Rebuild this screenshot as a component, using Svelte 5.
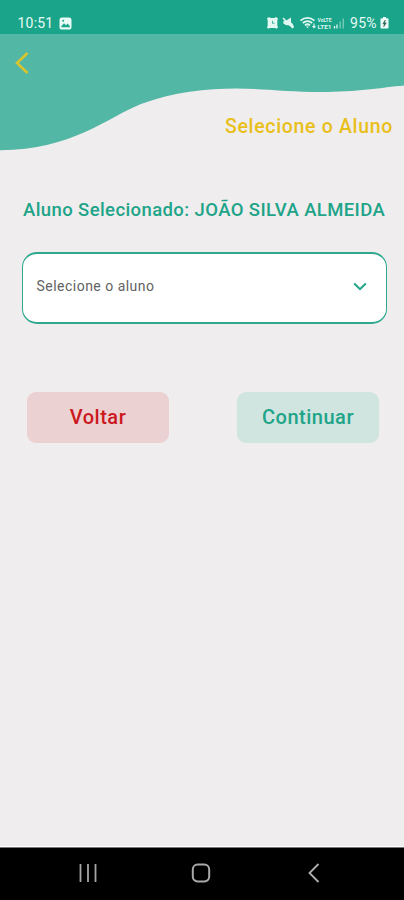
<script>
  let selectLabel = 'Selecione o aluno';
  let student = 'JOÃO SILVA ALMEIDA';
</script>

<div class="screen">
  <div class="status">
    <span class="time">10:51</span>
    <svg class="photo" width="13" height="13" viewBox="0 0 13 13">
      <rect x="0.5" y="0.5" width="12" height="12" rx="2.6" fill="#e9fbf6" />
      <path d="M2.3 9.2 5 6.2l2 2 1.7-1.6 2.2 2.6v1H2.3z" fill="#1aa58a" />
      <circle cx="4.2" cy="3.8" r="1" fill="#1aa58a" />
    </svg>
    <svg class="tray" width="82" height="14" viewBox="0 0 82 14">
      <g fill="#e3f8f2">
        <path d="M1 2.5 3 1l1.600 1h3.800L10 1l2 1.500-.7 2v5l.7 2-1.500 1.200-1.200-.8H3.700l-1.200.8L1 11.500l.7-2v-5z" />
        <path d="M17.500 4.800H20l5-3.200v4.600l1.700 1.700 1.300 3-1.200 1.400-3-2.800-4-.4L17.300 7.500z" />
      </g>
      <g fill="none" stroke="#e3f8f2">
        <path d="M6.500 4.800V7.300h2" stroke="#1aa58a" stroke-width=".8" />
        <path d="m17 2 10 10" stroke-width="1.500" />
        <path d="M34.500 4.600q7-5.400 14 0M36.800 7q4.700-3.800 9.400 0M39 9.400q2.500-2.200 5 0" stroke-width="1.800" />
        <path d="M48 7.500v4m-1.500-1.400 1.500 1.600 1.500-1.600" stroke-width="1.100" />
        <path d="M68.500 10v2.500M71 8.500v4" stroke-width="1.300" />
        <path d="M74.200 5.500v7M77.300 2.500v10" stroke-width="1.400" opacity=".45" />
      </g>
      <path d="m40 10.500 1.500 1.800 1.500-1.800z" fill="#e3f8f2" />
      <text x="51.500" y="6.200" class="tiny" textLength="14" lengthAdjust="spacingAndGlyphs">VoLTE</text>
      <text x="51.500" y="12.600" class="tiny" textLength="14" lengthAdjust="spacingAndGlyphs">LTE1</text>
    </svg>
    <span class="percent">95%</span>
    <svg class="battery" width="9" height="12" viewBox="0 0 9 12">
      <path d="M3 0h3v1.300h1.500q1 0 1 1v8.200q0 1-1 1h-6q-1 0-1-1V2.300q0-1 1-1H3z" fill="#eefcf8" />
      <path d="M5.300 3 2.800 6.700h1.500L3.700 9.800l2.600-3.900H4.700z" fill="#2b5a50" stroke="#2b5a50" stroke-width=".5" />
    </svg>
  </div>

  <header>
    <svg class="wave" width="404" height="120" viewBox="0 0 404 120">
      <path d="M0 0H404V51.500C382 53.500 357 58 320 58C290 58 264 54.500 236 54.500C207 54.500 173 58 141 70C108 83 72 116 0 116.300Z" fill="#52b7a4" />
    </svg>
    <svg class="back" width="16" height="24" viewBox="0 0 16 24">
      <path d="M13.500 2 3 12l10.500 10" fill="none" stroke="#dcc42d" stroke-width="2.500" />
    </svg>
    <h1>Selecione o Aluno</h1>
  </header>

  <main>
    <h2>Aluno Selecionado: {student}</h2>
    <div class="select">
      <span>{selectLabel}</span>
      <svg width="14" height="9" viewBox="0 0 14 9">
        <path d="m1.200 1.500 5.800 5.700 5.800-5.700" fill="none" stroke="#1da488" stroke-width="2" />
      </svg>
    </div>
    <div class="actions">
      <button class="cancel">Voltar</button>
      <button class="next">Continuar</button>
    </div>
  </main>

  <nav>
    <svg width="18" height="20" viewBox="0 0 18 20">
      <path d="M1.500 1v18M9 1v18M16.500 1v18" stroke="#a5a5a5" stroke-width="1.800" />
    </svg>
    <svg class="home" width="20" height="20" viewBox="0 0 20 20">
      <rect x="1.800" y="1.600" width="16.400" height="16.800" rx="4.800" fill="none" stroke="#a9a9a9" stroke-width="2" />
    </svg>
    <svg width="12" height="20" viewBox="0 0 12 20">
      <path d="M10.500 1 1.500 10l9 9" fill="none" stroke="#b0b0b0" stroke-width="1.800" />
    </svg>
  </nav>
</div>

<style>
  .screen {
    width: 404px;
    height: 900px;
    display: flex;
    flex-direction: column;
    overflow: hidden;
    background: #efedee;
    font-family: Roboto, "Liberation Sans", sans-serif;
  }
  .status {
    height: 34px;
    flex: none;
    box-sizing: border-box;
    padding: 12px 15px 0 17.500px;
    display: flex;
    align-items: center;
    background: #1aa58a;
    color: #e6faf5;
    font-size: 14px;
    line-height: 22px;
    letter-spacing: 0.2px;
  }
  .photo { margin-left: 6px; }
  .tray { margin-left: auto; }
  .tiny { font-size: 5.500px; line-height: 6px; letter-spacing: 0; font-weight: 700; fill: #d9f4ed; }
  .percent { margin-left: 2px; width: 30px; letter-spacing: 0.3px; }
  .battery { flex: none; }
  header {
    position: relative;
    height: 122px;
    flex: none;
  }
  .wave {
    position: absolute;
    inset: 0 auto auto 0;
  }
  .back {
    position: absolute;
    top: 17px;
    left: 14px;
  }
  h1 {
    position: relative;
    margin: 0;
    padding: 81px 11px 0 0;
    text-align: right;
    font-size: 19.500px;
    line-height: 24px;
    font-weight: 500;
    letter-spacing: 0.67px;
    color: #e9c01b;
  }
  main { flex: 1; padding: 42px 17px 0 22px; }
  h2 {
    margin: 0 0 0 1px;
    font-size: 18.500px;
    line-height: 24px;
    font-weight: 500;
    letter-spacing: 0.4px;
    white-space: nowrap;
    color: #1ea488;
  }
  .select {
    margin-top: 30px;
    height: 72px;
    box-sizing: border-box;
    border: 2px solid #2fa88f;
    border-left-width: 1px;
    border-right-width: 1px;
    border-radius: 15px;
    background: #fff;
    padding: 0 19px 4px 13.500px;
    display: flex;
    align-items: center;
    justify-content: space-between;
    font-size: 14px;
    letter-spacing: 0.48px;
    color: #626262;
  }
  .actions {
    margin-top: 68px;
    padding: 0 8px 0 5px;
    display: flex;
    justify-content: space-between;
  }
  button {
    width: 142px;
    height: 51px;
    border: 0;
    border-radius: 9px;
    padding: 0;
    font: 500 20px/51px Roboto, "Liberation Sans", sans-serif;
    letter-spacing: 0.5px;
  }
  .cancel { background: #ebd1d1; color: #cb1820; }
  .next { background: #d0e4e0; color: #1ea488; }
  nav {
    height: 53px;
    box-sizing: border-box;
    flex: none;
    background: #000;
    border-top: 1px solid #777;
    box-shadow: 0 -1px 0 #fff;
    padding: 0 84px 2px 79px;
    display: flex;
    align-items: center;
    justify-content: space-between;
  }
  .home { margin-right: 4px; }
</style>
